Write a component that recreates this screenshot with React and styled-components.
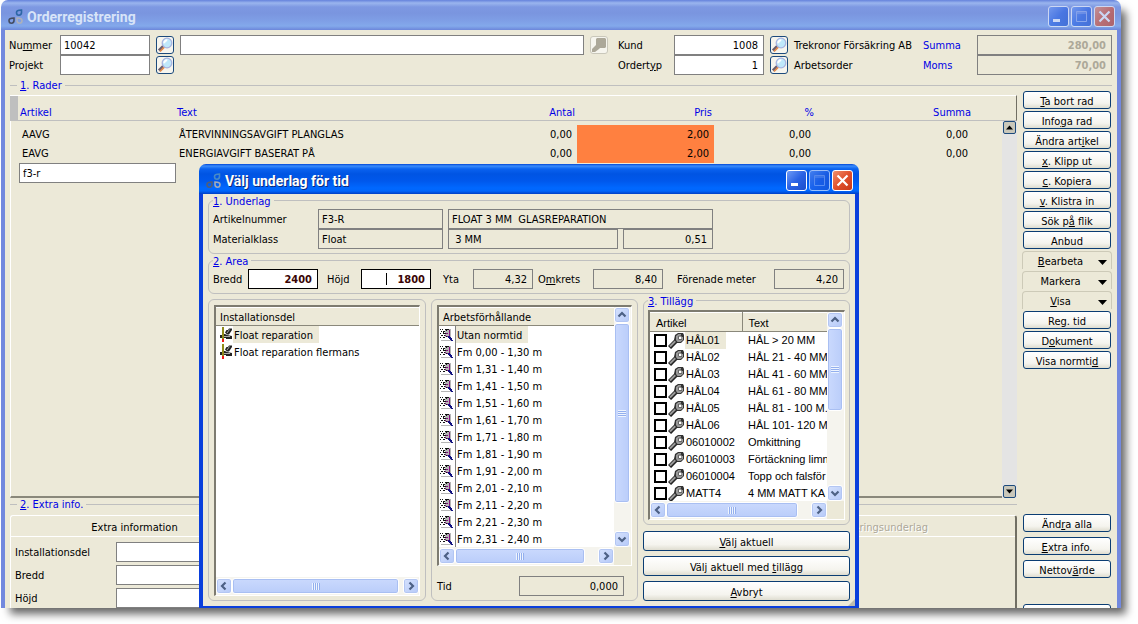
import React, { useState } from 'react';
import styled, { createGlobalStyle, css } from 'styled-components';

const GlobalStyle = createGlobalStyle`
* {
box-sizing: border-box;
}
body {
margin: 0;
background: #fff;
overflow: hidden;
}
body, input, button {
font-family: "DejaVu Sans Condensed", "Noto Sans", sans-serif;
font-size: 11px;
line-height: 13px;
color: #000;
}
`;

const Desktop = styled.div`
position: relative;
height: 100vh;
padding: 0 17px 16px 1px;
`;

const Window = styled.div`
height: 100%;
display: flex;
flex-direction: column;
border-radius: 7px 7px 0 0;
box-shadow: 7px 8px 8px -2px rgba(0, 0, 0, 0.6);
`;

const Dialog = styled.div`
position: absolute;
left: 199px;
right: 279px;
top: 164px;
bottom: 16px;
display: flex;
flex-direction: column;
`;

const TitleBar = styled.div`
flex: none;
height: 30px;
display: flex;
align-items: center;
gap: 2px;
padding: 3px 6px 0 7px;
border-radius: 7px 7px 0 0;
background: ${props => props.$active
    ? 'linear-gradient(#0046d5 0, #3a8cfb 2px, #0a62ef 5px, #0054e3 10px, #0058ec 17px, #0068ff 24px, #0066fb 27px, #003fc4 30px)'
    : 'linear-gradient(#6582dc 0, #9ab5ee 3px, #7d98e2 7px, #7a95df 13px, #7f9fe6 21px, #83a9eb 26px, #6c86da 30px)'};
`;

const Title = styled.h1`
flex: 1;
margin: 0 0 0 2px;
font-family: Roboto, "Noto Sans", sans-serif;
font-size: 14px;
line-height: 18px;
font-weight: 700;
color: ${props => props.$active ? '#fff' : '#d8e4f8'};
text-shadow: ${props => props.$active ? '1px 1px 0 #0a2a7c' : 'none'};
`;

const TitleButton = styled.button`
width: 21px;
height: 21px;
padding: 0;
display: flex;
align-items: center;
justify-content: center;
border: 1px solid #fff;
border-radius: 3px;
opacity: ${props => props.$faded ? 0.6 : 1};
background: ${props => props.$close
    ? 'linear-gradient(135deg, #f0906c, #e0502c 50%, #c8391a)'
    : 'linear-gradient(135deg, #6f9bf6, #2a62e4 50%, #1b4ecb)'};
`;

const Frame = styled.div`
flex: 1;
min-height: 0;
display: flex;
flex-direction: column;
background: #ece9d8;
border: solid ${props => props.$active ? '#0a3fdc' : '#7389de'};
border-width: ${props => props.$active ? '0 4px 2px' : '0 4px 0'};
`;

const OrderHead = styled.div`
flex: none;
display: grid;
grid-template-columns: 51px 90px 30px 1fr 34px 56px 90px 30px 129px 54px 135px;
grid-auto-rows: 20px;
align-items: center;
padding: 5px 5px 0 4px;
`;

const HeadLabel = styled.label`
color: ${props => props.$blue ? '#0000e6' : '#000'};
white-space: nowrap;
`;

const HeadText = styled.span`
white-space: nowrap;
`;

const Field = styled.input`
display: block;
width: ${props => props.$w ? props.$w + 'px' : '100%'};
height: 20px;
margin: 0;
padding: 0 3px;
border: 1px solid #808080;
border-radius: 0;
outline: none;
background: ${props => props.readOnly ? 'transparent' : '#fff'};
text-align: ${props => props.$num ? 'right' : 'left'};
${props => props.$num && css`padding-right: 5px;`}
${props => props.$muted && css`
font-weight: 700;
color: #aca899;
`}
${props => props.$strong && css`
font-weight: 700;
color: #3a0505;
border-color: #000;
`}
`;

const CaretField = styled(Field)`
background: linear-gradient(#000, #000) 24px 3px / 1px 12px no-repeat #fff;
`;

const LookupButton = styled.button`
width: 18px;
height: 18px;
margin-left: 6px;
padding: 0;
display: flex;
align-items: center;
justify-content: center;
border: 1px solid ${props => props.disabled ? '#c9c7ba' : '#1c4a7c'};
border-radius: 3px;
background: #f6f5ee;
`;

const Divider = styled.div`
flex: none;
display: flex;
align-items: center;
gap: 3px;
height: 12px;
color: #0000e6;
&::before, &::after {
content: "";
height: 1px;
background: #bfbfbf;
}
&::before {
width: 7px;
}
&::after {
flex: 1;
}
`;

const DividerRow = styled.div`
flex: none;
padding: 4px 5px 0;
`;

const Workspace = styled.div`
flex: 1;
min-height: 0;
display: flex;
gap: 5px;
padding: 0 5px;
`;

const Sheet = styled.div`
flex: 1;
min-width: 0;
display: flex;
flex-direction: column;
padding-top: 4px;
`;

const RowsPanel = styled.div`
flex: 1;
min-height: 0;
display: flex;
flex-direction: column;
`;

const RowsHead = styled.div`
flex: none;
display: flex;
height: 26px;
border-top: 1px solid #fff;
border-right: 1px solid #716f64;
border-bottom: 1px solid #bfbfbf;
&::before {
content: "";
width: 8px;
background: #bfbfbf;
}
`;

const RowsBody = styled.div`
flex: 1;
min-height: 0;
display: flex;
`;

const RowsInner = styled.div`
flex: 1;
padding: 4px 0 0 8px;
border-left: 1px solid #fff;
border-bottom: 2px solid #8a887b;
`;

const RowsTable = styled.table`
width: 100%;
table-layout: fixed;
border-collapse: collapse;
th, td {
padding: 0 5px 0 3px;
text-align: left;
font-weight: 400;
white-space: nowrap;
}
th {
height: 24px;
padding: 9px 2px 0 1px;
color: #0000e6;
}
td {
height: 19px;
}
`;

const Cell = styled.td`
&& {
text-align: ${props => props.$num ? 'right' : 'left'};
background: ${props => props.$hot ? '#ff8040' : 'transparent'};
${props => props.$bare && css`padding: 0;`}
}
`;

const HeadCell = styled.th`
&& {
text-align: ${props => props.$num ? 'right' : 'left'};
}
`;

const HeadTableBox = styled.div`
flex: 1;
padding: 0 14px 0 1px;
`;

const Gutter = styled.div`
width: 15px;
display: flex;
flex-direction: column;
justify-content: space-between;
align-items: center;
background: #e4e4e4;
`;

const GutterButton = styled.button`
width: 13px;
height: 13px;
padding: 0;
display: flex;
align-items: center;
justify-content: center;
border: 1px solid #1c4a7c;
border-radius: 2px;
background: #c9c7ba;
`;

const ExtraPanel = styled.div`
flex: none;
height: 110px;
overflow: hidden;
`;

const ExtraBox = styled.div`
height: 110px;
margin-top: 5px;
border: 1px solid #fff;
border-right: 2px solid #716f64;
border-radius: 3px 3px 0 0;
`;

const Tabs = styled.div`
height: 21px;
display: flex;
padding-right: 16px;
border-bottom: 1px solid #fff;
`;

const Tab = styled.button`
flex: 1;
padding: 3px 0 0;
border: 0;
background: none;
&:disabled {
color: #aca899;
text-shadow: 1px 1px 0 #fff;
}
`;

const ExtraFields = styled.div`
display: grid;
grid-template-columns: 101px 250px;
align-items: center;
padding: 5px 4px 0;
row-gap: 3px;
`;

const Side = styled.div`
flex: none;
width: 90px;
display: flex;
flex-direction: column;
`;

const SideGroup = styled.div`
flex: 1;
display: flex;
flex-direction: column;
gap: 2px;
padding: 0 1px;
`;

const SideFoot = styled(SideGroup)`
flex: 0 0 94px;
gap: 5px;
overflow: hidden;
`;

const PushButton = styled.button`
flex: none;
height: ${props => props.$h || 18}px;
padding: 2px 0 0;
border: 1px solid #0b3d73;
border-radius: 3px;
background: linear-gradient(#fff, #f5f4ee 70%, #dfddd0);
white-space: nowrap;
`;

const MenuButton = styled.button`
flex: none;
height: 18px;
margin: 0 -1px;
padding: 2px 4px 0 0;
display: flex;
align-items: center;
border: 1px solid #cdcab8;
border-bottom: 0;
border-radius: 4px 4px 0 0;
background: none;
span {
flex: 1;
text-align: center;
}
svg {
margin-top: 2px;
}
`;

const SideGap = styled.div`
flex: none;
height: ${props => props.$h}px;
`;

const DialogBody = styled.form`
flex: 1;
min-height: 0;
display: flex;
flex-direction: column;
padding: 0 5px 5px;
`;

const Group = styled.fieldset`
flex: ${props => props.$grow ? '1' : 'none'};
min-width: 0;
min-height: 0;
margin: 0;
padding: 2px 4px 4px;
border: 1px solid #bfbfbf;
border-radius: 6px;
`;

const Legend = styled.legend`
height: 13px;
padding: 1px 3px 0 0;
color: #0000e6;
`;

const FieldRow = styled.div`
display: flex;
align-items: center;
label {
flex: none;
width: ${props => props.$label || 105}px;
white-space: nowrap;
}
`;

const Spacer = styled.div`
flex: none;
width: ${props => props.$w}px;
`;

const AreaLabel = styled.label`
&& {
width: ${props => props.$w}px;
}
`;

const Columns = styled.div`
flex: 1;
min-height: 0;
display: grid;
grid-template-columns: 218fr 207fr 207fr;
grid-template-rows: 100%;
column-gap: 5px;
`;

const Pane = styled.div`
display: flex;
flex-direction: column;
min-width: 0;
margin-top: 5px;
padding: 5px 5px 4px;
border: 1px solid #bfbfbf;
border-radius: 6px;
`;

const AddOns = styled.div`
display: flex;
flex-direction: column;
gap: 5px;
min-width: 0;
`;

const AddOnGroup = styled(Group)`
padding-top: 3px;
margin-bottom: 1px;
`;

const ListBox = styled.div`
flex: 1;
min-height: 0;
height: ${props => props.$full ? '100%' : 'auto'};
display: grid;
grid-template-columns: minmax(0, 1fr) ${props => props.$vertical ? '17px' : ''};
grid-template-rows: minmax(0, 1fr) 18px;
border: 1px solid #fff;
border-width: 2px 1px 1px 2px;
border-top-color: #7d7b70;
border-left-color: #7d7b70;
background: #ece9d8;
`;

const ListArea = styled.div`
overflow: hidden;
background: #fff;
`;

const ListHead = styled.div`
height: 19px;
padding: 3px 4px 0;
background: #ece9d8;
border-bottom: 1px solid #8a887b;
border-top: 1px solid #fff;
`;

const List = styled.ul`
margin: 0;
padding: 0 0 0 ${props => props.$inset || 0}px;
list-style: none;
`;

const Item = styled.li`
height: 17px;
display: flex;
align-items: center;
gap: ${props => props.$gap || 0}px;
white-space: nowrap;
`;

const ItemText = styled.span`
height: 17px;
padding: 3px 6px 0 1px;
line-height: 13px;
background: ${props => props.$selected ? '#ece9d8' : 'transparent'};
${props => props.$ruled && css`border-left: 1px solid #808080;`}
`;

const AddOnTable = styled.table`
width: 100%;
table-layout: fixed;
border-collapse: collapse;
font-family: "Liberation Sans", Arial, sans-serif;
th {
height: 19px;
padding: 2px 6px 0;
text-align: left;
font-weight: 400;
background: #ece9d8;
border-top: 1px solid #fff;
border-bottom: 1px solid #8a887b;
border-right: 1px solid #8a887b;
}
th:last-child {
border-right: 0;
}
td {
height: 17px;
padding: 0 0 0 6px;
overflow: hidden;
white-space: nowrap;
}
td:first-child {
padding: 0 0 0 4px;
}
`;

const AddOnLabel = styled.label`
display: flex;
align-items: center;
`;

const AddOnText = styled.span`
padding: 2px 6px 2px 1px;
background: ${props => props.$selected ? '#ece9d8' : 'transparent'};
`;

const Check = styled.input`
appearance: none;
flex: none;
width: 13px;
height: 13px;
margin: 0 1px 0 0;
border: 2px solid #000;
background: #fff;
&:checked {
box-shadow: inset 0 0 0 2px #fff;
background: #000;
}
`;

const ScrollTrack = styled.div`
display: flex;
flex-direction: ${props => props.$vertical ? 'column' : 'row'};
padding: ${props => props.$vertical ? '0 1px 0 0' : '1px 0'};
background: #f5f4ee;
`;

const ScrollButton = styled.button`
flex: none;
width: 16px;
height: 16px;
padding: 0;
display: flex;
align-items: center;
justify-content: center;
border: 1px solid #fff;
border-radius: 3px;
background: linear-gradient(135deg, #d6e2fd, #b5c9f8);
box-shadow: inset 0 0 0 1px #b3c6f3;
`;

const Thumb = styled.div`
display: flex;
align-items: center;
justify-content: center;
border: 1px solid #fff;
border-radius: 3px;
box-shadow: inset 0 0 0 1px #a9bff2;
background: linear-gradient(${props => props.$vertical ? '90deg' : '180deg'}, #cad9fd, #bacdfa);
&::after {
content: "";
width: 8px;
height: 7px;
background: repeating-linear-gradient(${props => props.$vertical ? '180deg' : '90deg'}, #eef4fe 0 1px, #93afee 1px 2px);
}
`;

const TimeRow = styled.div`
flex: none;
display: flex;
justify-content: space-between;
align-items: center;
padding: 10px 8px 0 0;
`;

const Grip = styled.svg`
position: absolute;
right: 4px;
bottom: 2px;
`;

// "_" marks the letter that is the keyboard shortcut
function Keyed({ text }) {
  const at = text.indexOf('_');
  if (at < 0) {
    return text;
  }
  return (
    <span>{text.slice(0, at)}<u>{text[at + 1]}</u>{text.slice(at + 2)}</span>
  );
}

function AppIcon({ faded }) {
  const drop = 'M1 3.5C1 1.5 2.5 1 6 1v2.6C6 5.5 5 6.200 3.500 6.200S1 5.300 1 3.500z';
  return (
    <svg width="15" height="16" viewBox="0 0 15 16" fill="none" strokeWidth="1.600" opacity={faded ? 0.85 : 0.9}>
      <path d={drop} stroke={faded ? '#1f5f9c' : '#4f8fc4'} transform="translate(7.500 0)" />
      <path d={drop} stroke={faded ? '#3a3f4c' : '#5a5f6c'} transform="translate(0 8)" />
      <path d="M1 1c3.500 0 5 .5 5 2.500S5 6.200 3.500 6.200 1 5.500 1 3.600z" stroke="#b4b4b4" transform="translate(8 8)" />
    </svg>
  );
}

function MagnifierIcon({ muted }) {
  if (muted) {
    return (
      <svg width="16" height="16" viewBox="0 0 16 16">
        <path d="M6 1h8l1 1v8l-1 1H9l-1 1-4 3H1v-3l4-4V2z" fill="#aca899" />
      </svg>
    );
  }
  return (
    <svg width="16" height="16" viewBox="0 0 16 16">
      <path d="M6.500 9 2 13.500" stroke="#6a5f70" strokeWidth="3" />
      <path d="M7.500 9.800 3 14.500" stroke="#e08a4c" strokeWidth="1.800" />
      <circle cx="10" cy="6" r="4.800" fill="#bfe8fb" stroke="#a9b4e0" strokeWidth="1.300" />
      <path d="M7.300 6.200a2.800 2.800 0 0 1 3-2.900" stroke="#fff" strokeWidth="2" fill="none" />
    </svg>
  );
}

function WrenchIcon() {
  return (
    <svg width="17" height="17" viewBox="0 0 17 17">
      <path d="M1.500 15.500 9 8" stroke="#222" strokeWidth="4.400" />
      <path d="M2 14.500 9 7.500" stroke="#999" strokeWidth="2" />
      <path d="M7 3 10 1h5l1 2v5l-3 3H9L6 8z" fill="#333" />
      <path d="M8 4 10.500 2H13v1.500l-2.500.5v3.500h3.500V5h1v3l-2.500 2H9.500L8 8z" fill="#999" />
      <path d="M11 4.500h2.500v2.500H11z" fill="#fff" />
    </svg>
  );
}

function PartIcon() {
  return (
    <svg width="14" height="15" viewBox="0 0 14 15">
      <path d="M6 5.500 7.500 3H9l1-1.500h3V3l-3 4.500H8zM1 8h2V7h3l2 1 5 1v3H7v-1H1z" fill="#222" />
      <path d="m8 6 2.500-3.500M5 9.500h6" stroke="#aaa" />
      <path d="M3 0h2v12H3z" fill="#918c1c" />
      <path d="M3 12h2v3H3z" fill="#f01818" />
    </svg>
  );
}

function ConditionIcon() {
  return (
    <svg width="13" height="14" viewBox="0 0 13 14" shapeRendering="crispEdges">
      <path d="M1 12.500h9.500V1" stroke="#b5b5b5" fill="none" />
      <path d="M5 1h5v8H5z" fill="#b5b5b5" />
      <path d="M0 1.500h1m1 0h1m2 0h4M1 3.500h1m1 0h2m-5 2h1m2 0h3M1 7.500h2m1 0h1M0 9.500h1m2 0h2m1-1h2M3 4.500h1M6 2.500h1" stroke="#111" />
      <path d="M9.500 2v6M6 5.500h2M5.500 7v1M7 8.500h3" stroke="#80107c" />
      <path d="m8.500 8.500 4 4.500" stroke="#101080" strokeWidth="2" />
    </svg>
  );
}

function Triangle({ up, size = 9 }) {
  return (
    <svg width={size} height="5" viewBox="0 0 9 5">
      <path d={up ? 'M0 5 4.500 0 9 5z' : 'M0 0h9L4.500 5z'} fill="#000" />
    </svg>
  );
}

const chevrons = {
  up: 'M1.500 6.500 5 3l3.500 3.500',
  down: 'M1.500 3.500 5 7l3.500-3.500',
  left: 'M6.500 1.500 3 5l3.500 3.500',
  right: 'M3.500 1.500 7 5 3.500 8.500',
};

function Chevron({ to }) {
  return (
    <svg width="10" height="10" viewBox="0 0 10 10">
      <path d={chevrons[to]} fill="none" stroke="#4d6185" strokeWidth="2.200" />
    </svg>
  );
}

function Scrollbar({ vertical, thumb, rest }) {
  return (
    <ScrollTrack $vertical={vertical}>
      <ScrollButton type="button" aria-label={vertical ? 'Upp' : 'Vänster'}>
        <Chevron to={vertical ? 'up' : 'left'} />
      </ScrollButton>
      <Thumb $vertical={vertical} style={{ flexGrow: thumb }} />
      <div style={{ flexGrow: rest }} />
      <ScrollButton type="button" aria-label={vertical ? 'Ned' : 'Höger'}>
        <Chevron to={vertical ? 'down' : 'right'} />
      </ScrollButton>
    </ScrollTrack>
  );
}

function WindowTitle({ title, active }) {
  return (
    <TitleBar $active={active}>
      <AppIcon faded={!active} />
      <Title $active={active}>{title}</Title>
      <TitleButton type="button" aria-label="Minimera" $faded={!active}>
        <svg width="19" height="19"><path d="M4 12h7v3H4z" fill="#fff" /></svg>
      </TitleButton>
      <TitleButton type="button" aria-label="Maximera" $faded>
        <svg width="19" height="19" fill="none" stroke="#8fabf0"><path d="M4.500 4.500h10v10h-10zM4.500 6h10" /></svg>
      </TitleButton>
      <TitleButton type="button" aria-label="Stäng" $close $faded={!active}>
        <svg width="19" height="19"><path d="m4.500 4.500 10 10m0-10-10 10" stroke="#fff" strokeWidth="2.200" /></svg>
      </TitleButton>
    </TitleBar>
  );
}

const orderRows = [
  ['AAVG', 'ÅTERVINNINGSAVGIFT PLANGLAS'],
  ['EAVG', 'ENERGIAVGIFT BASERAT PÅ'],
];

const conditions = [
  'Utan normtid',
  'Fm 0,00 - 1,30 m',
  'Fm 1,31 - 1,40 m',
  'Fm 1,41 - 1,50 m',
  'Fm 1,51 - 1,60 m',
  'Fm 1,61 - 1,70 m',
  'Fm 1,71 - 1,80 m',
  'Fm 1,81 - 1,90 m',
  'Fm 1,91 - 2,00 m',
  'Fm 2,01 - 2,10 m',
  'Fm 2,11 - 2,20 m',
  'Fm 2,21 - 2,30 m',
  'Fm 2,31 - 2,40 m',
];

const addOns = [
  ['HÅL01', 'HÅL > 20 MM'],
  ['HÅL02', 'HÅL 21 - 40 MM'],
  ['HÅL03', 'HÅL 41 - 60 MM'],
  ['HÅL04', 'HÅL 61 - 80 MM'],
  ['HÅL05', 'HÅL 81 - 100 M.'],
  ['HÅL06', 'HÅL 101- 120 M'],
  ['06010002', 'Omkittning'],
  ['06010003', 'Förtäckning limn'],
  ['06010004', 'Topp och falsför'],
  ['MATT4', '4 MM MATT KA'],
];

const rowActions = ['_Ta bort rad', 'Info_ga rad', 'Ändra art_ikel', '_x. Klipp ut', '_c. Kopiera', '_v. Klistra in', 'Sök p_å flik', 'Anbud'];
const menus = ['_Bearbeta', 'Markera', '_Visa'];
const moreActions = ['Reg. tid', 'D_okument', 'Visa normti_d'];

function RowColumns() {
  return (
    <colgroup>
      <col style={{ width: 157 }} />
      <col />
      <col style={{ width: 87 }} />
      <col style={{ width: 137 }} />
      <col style={{ width: 102 }} />
      <col style={{ width: 157 }} />
      <col style={{ width: 29 }} />
    </colgroup>
  );
}

function OrderHeader() {
  return (
    <OrderHead>
      <HeadLabel htmlFor="nummer"><Keyed text="Nu_mmer" /></HeadLabel>
      <Field id="nummer" defaultValue="10042" />
      <LookupButton type="button" aria-label="Sök nummer"><MagnifierIcon /></LookupButton>
      <Field aria-label="Beskrivning" />
      <LookupButton type="button" aria-label="Sök beskrivning" disabled><MagnifierIcon muted /></LookupButton>
      <HeadLabel htmlFor="kund">Kund</HeadLabel>
      <Field id="kund" defaultValue="1008" $num />
      <LookupButton type="button" aria-label="Sök kund"><MagnifierIcon /></LookupButton>
      <HeadText>Trekronor Försäkring AB</HeadText>
      <HeadLabel htmlFor="summa" $blue>Summa</HeadLabel>
      <Field id="summa" value="280,00" readOnly $num $muted />

      <HeadLabel htmlFor="projekt">Projekt</HeadLabel>
      <Field id="projekt" />
      <LookupButton type="button" aria-label="Sök projekt"><MagnifierIcon /></LookupButton>
      <span />
      <span />
      <HeadLabel htmlFor="ordertyp"><Keyed text="Ordert_yp" /></HeadLabel>
      <Field id="ordertyp" defaultValue="1" $num />
      <LookupButton type="button" aria-label="Sök ordertyp"><MagnifierIcon /></LookupButton>
      <HeadText>Arbetsorder</HeadText>
      <HeadLabel htmlFor="moms" $blue>Moms</HeadLabel>
      <Field id="moms" value="70,00" readOnly $num $muted />
    </OrderHead>
  );
}

function OrderRows() {
  return (
    <RowsPanel>
      <RowsHead>
        <HeadTableBox>
          <RowsTable>
            <RowColumns />
            <thead>
              <tr>
                <HeadCell>Artikel</HeadCell>
                <HeadCell>Text</HeadCell>
                <HeadCell $num>Antal</HeadCell>
                <HeadCell $num>Pris</HeadCell>
                <HeadCell $num>%</HeadCell>
                <HeadCell $num>Summa</HeadCell>
                <HeadCell />
              </tr>
            </thead>
          </RowsTable>
        </HeadTableBox>
      </RowsHead>
      <RowsBody>
        <RowsInner>
          <RowsTable>
            <RowColumns />
            <tbody>
              {orderRows.map(([article, text]) => (
                <tr key={article}>
                  <Cell>{article}</Cell>
                  <Cell>{text}</Cell>
                  <Cell $num>0,00</Cell>
                  <Cell $num $hot>2,00</Cell>
                  <Cell $num>0,00</Cell>
                  <Cell $num>0,00</Cell>
                  <td />
                </tr>
              ))}
              <tr>
                <Cell $bare><Field aria-label="Artikel" defaultValue="f3-r" /></Cell>
                <td colSpan="6" />
              </tr>
            </tbody>
          </RowsTable>
        </RowsInner>
        <Gutter>
          <GutterButton type="button" aria-label="Upp"><Triangle up size={7} /></GutterButton>
          <GutterButton type="button" aria-label="Ned"><Triangle size={7} /></GutterButton>
        </Gutter>
      </RowsBody>
    </RowsPanel>
  );
}

function ExtraInfo() {
  return (
    <ExtraPanel>
      <Divider><Keyed text="_2. Extra info." /></Divider>
      <ExtraBox>
        <Tabs>
          <Tab type="button">Extra information</Tab>
          <Tab type="button" disabled aria-label="Flik 2" />
          <Tab type="button" disabled aria-label="Flik 3" />
          <Tab type="button" disabled>Faktureringsunderlag</Tab>
        </Tabs>
        <ExtraFields>
          <label htmlFor="extra-del">Installationsdel</label>
          <Field id="extra-del" />
          <label htmlFor="extra-bredd">Bredd</label>
          <Field id="extra-bredd" />
          <label htmlFor="extra-hojd">Höjd</label>
          <Field id="extra-hojd" />
        </ExtraFields>
      </ExtraBox>
    </ExtraPanel>
  );
}

function SideBar() {
  return (
    <Side>
      <SideGroup>
        {rowActions.map(text => <PushButton type="button" key={text}><Keyed text={text} /></PushButton>)}
        {menus.map(text => (
          <MenuButton type="button" key={text}>
            <span><Keyed text={text} /></span>
            <Triangle />
          </MenuButton>
        ))}
        {moreActions.map(text => <PushButton type="button" key={text}><Keyed text={text} /></PushButton>)}
      </SideGroup>
      <SideFoot>
        <PushButton type="button"><Keyed text="Änd_ra alla" /></PushButton>
        <PushButton type="button"><Keyed text="_Extra info." /></PushButton>
        <PushButton type="button"><Keyed text="Nettov_ärde" /></PushButton>
        <SideGap $h={16} />
        <PushButton type="button" aria-label="Mer" />
      </SideFoot>
    </Side>
  );
}

function TimeDialog() {
  const [checked, setChecked] = useState({});
  return (
    <Dialog role="dialog" aria-label="Välj underlag för tid">
      <WindowTitle title="Välj underlag för tid" active />
      <Frame $active>
        <DialogBody onSubmit={event => event.preventDefault()}>
          <Group>
            <Legend><Keyed text="_1. Underlag" /></Legend>
            <FieldRow>
              <label htmlFor="artikelnummer">Artikelnummer</label>
              <Field id="artikelnummer" value="F3-R" readOnly $w={125} />
              <Spacer $w={5} />
              <Field aria-label="Artikeltext" value="FLOAT 3 MM  GLASREPARATION" readOnly $w={265} />
            </FieldRow>
            <FieldRow>
              <label htmlFor="materialklass">Materialklass</label>
              <Field id="materialklass" value="Float" readOnly $w={125} />
              <Spacer $w={5} />
              <Field aria-label="Tjocklek" value=" 3 MM" readOnly $w={170} />
              <Spacer $w={5} />
              <Field aria-label="Faktor" value="0,51" readOnly $num $w={90} />
            </FieldRow>
          </Group>
          <Group>
            <Legend><Keyed text="_2. Area" /></Legend>
            <FieldRow>
              <AreaLabel $w={35} htmlFor="bredd">Bredd</AreaLabel>
              <Field id="bredd" defaultValue="2400" $num $strong $w={70} />
              <Spacer $w={9} />
              <AreaLabel $w={34} htmlFor="hojd">Höjd</AreaLabel>
              <CaretField id="hojd" defaultValue="1800" $num $strong $w={70} />
              <Spacer $w={12} />
              <AreaLabel $w={30} htmlFor="yta">Yta</AreaLabel>
              <Field id="yta" value="4,32" readOnly $num $w={60} />
              <Spacer $w={5} />
              <AreaLabel $w={55} htmlFor="omkrets"><Keyed text="O_mkrets" /></AreaLabel>
              <Field id="omkrets" value="8,40" readOnly $num $w={70} />
              <Spacer $w={14} />
              <AreaLabel $w={97} htmlFor="meter">Förenade meter</AreaLabel>
              <Field id="meter" value="4,20" readOnly $num $w={70} />
            </FieldRow>
          </Group>
          <Columns>
            <Pane>
              <ListBox>
                <ListArea>
                  <ListHead>Installationsdel</ListHead>
                  <List $inset={3}>
                    <Item><PartIcon /><ItemText $selected>Float reparation</ItemText></Item>
                    <Item><PartIcon /><ItemText>Float reparation flermans</ItemText></Item>
                  </List>
                </ListArea>
                <Scrollbar thumb={166} rest={4} />
              </ListBox>
            </Pane>
            <Pane>
              <ListBox $vertical>
                <ListArea>
                  <ListHead>Arbetsförhållande</ListHead>
                  <List $inset={1}>
                    {conditions.map((text, i) => (
                      <Item key={text} $gap={2}>
                        <ConditionIcon />
                        <ItemText $ruled $selected={i === 0}>{text}</ItemText>
                      </Item>
                    ))}
                  </List>
                </ListArea>
                <Scrollbar vertical thumb={178} rest={29} />
                <Scrollbar thumb={128} rest={14} />
              </ListBox>
              <TimeRow>
                <label htmlFor="tid">Tid</label>
                <Field id="tid" value="0,000" readOnly $num $w={105} />
              </TimeRow>
            </Pane>
            <AddOns>
              <AddOnGroup $grow>
                <Legend><Keyed text="_3. Tillägg" /></Legend>
                <ListBox $vertical $full>
                  <ListArea>
                    <AddOnTable>
                      <colgroup>
                        <col style={{ width: 92 }} />
                        <col />
                      </colgroup>
                      <thead>
                        <tr><th>Artikel</th><th>Text</th></tr>
                      </thead>
                      <tbody>
                        {addOns.map(([article, text], i) => (
                          <tr key={article}>
                            <td>
                              <AddOnLabel>
                                <Check
                                  type="checkbox"
                                  checked={!!checked[article]}
                                  onChange={event => setChecked({ ...checked, [article]: event.target.checked })}
                                />
                                <WrenchIcon />
                                <AddOnText $selected={i === 0}>{article}</AddOnText>
                              </AddOnLabel>
                            </td>
                            <td>{text}</td>
                          </tr>
                        ))}
                      </tbody>
                    </AddOnTable>
                  </ListArea>
                  <Scrollbar vertical thumb={78} rest={79} />
                  <Scrollbar thumb={128} rest={14} />
                </ListBox>
              </AddOnGroup>
              <PushButton type="submit" $h={20}><Keyed text="_Välj aktuell" /></PushButton>
              <PushButton type="button" $h={20}><Keyed text="Välj aktuell med _tillägg" /></PushButton>
              <PushButton type="button" $h={20}><Keyed text="_Avbryt" /></PushButton>
            </AddOns>
          </Columns>
        </DialogBody>
      </Frame>
      <Grip width="7" height="7" viewBox="0 0 7 7"><path d="M7 0v7H0z" fill="#bdbbae" /></Grip>
    </Dialog>
  );
}

function App() {
  return (
    <Desktop>
      <GlobalStyle />
      <Window>
        <WindowTitle title="Orderregistrering" />
        <Frame>
          <OrderHeader />
          <DividerRow>
            <Divider><Keyed text="_1. Rader" /></Divider>
          </DividerRow>
          <Workspace>
            <Sheet>
              <OrderRows />
              <ExtraInfo />
            </Sheet>
            <SideBar />
          </Workspace>
        </Frame>
      </Window>
      <TimeDialog />
    </Desktop>
  );
}

export default App;
